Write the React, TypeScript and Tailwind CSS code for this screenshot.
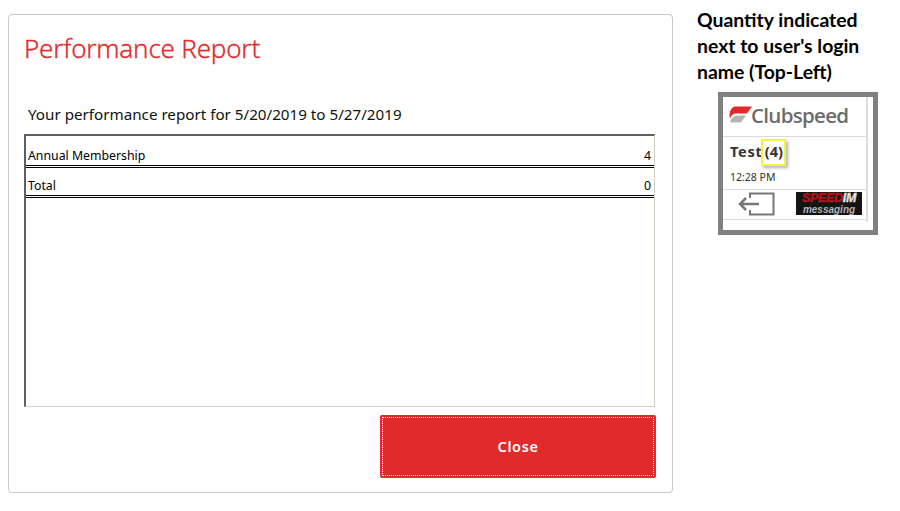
export default function App() {
  return (
    <div className="w-[900px] h-[511px] bg-white overflow-hidden flex items-start pl-2 pt-[14px] font-['Open_Sans',sans-serif]">
      <div className="w-[665px] h-[479px] shrink-0 border border-[#c8c8c8] rounded-[4px] flex flex-col pl-[15px] pr-[17px]">
        <h1 className="mt-[13px] h-[40px] text-[26px] leading-[40px] font-light text-[#e12a2b] font-['Noto_Sans',sans-serif] tracking-[-0.2px] [-webkit-text-stroke:0.3px_#e12a2b]">Performance Report</h1>
        <p className="mt-[34px] pl-[4px] h-[24px] text-[15.2px] leading-[24px] text-[#111] font-['Noto_Sans',sans-serif]">Your performance report for 5/20/2019 to 5/27/2019</p>
        <div className="mt-[8px] h-[273px] border-t-2 border-l-2 border-t-[#5f5f5f] border-l-[#5f5f5f] border-r border-b border-r-[#d4d0c8] border-b-[#d4d0c8] text-[12.3px] text-black font-['Noto_Sans',sans-serif]">
          <div className="h-[32px] border-b-[3px] border-double border-black flex items-end justify-between pl-[2px] pr-[3px] leading-[18px]">
            <span>Annual Membership</span>
            <span>4</span>
          </div>
          <div className="h-[30px] border-b-[3px] border-double border-black flex items-end justify-between pl-[2px] pr-[3px] leading-[18px]">
            <span>Total</span>
            <span>0</span>
          </div>
        </div>
        <div className="mt-[8px] flex justify-end -mr-[1px]">
          <button className="w-[276px] h-[63px] bg-[#e12a2b] rounded-[2px] p-[2px] text-white">
            <span className="w-full h-full flex items-center justify-center border border-dotted border-white text-[14.5px] font-semibold tracking-[0.6px] font-['Noto_Sans',sans-serif]">Close</span>
          </button>
        </div>
      </div>
      <div className="ml-[24px] shrink-0 flex flex-col -mt-[10px]">
        <div className="h-[78px] w-[180px] pt-[3px] text-[19.4px] leading-[26px] font-bold text-black font-['Lato',sans-serif] whitespace-nowrap">
          Quantity indicated<br />next to user's login<br />name (Top-Left)
        </div>
        <div className="mt-[10px] ml-[21px] w-[160px] h-[143px] border-[5px] border-[#808080] bg-white font-['Noto_Sans',sans-serif]">
          <div className="w-[145px] h-[125px] border-r-[2px] border-[#dedede]">
            <div className="h-[40px] border-b border-[#dcdcdc] flex items-center pl-[6px] pb-[4px]">
              <svg width="23" height="18" viewBox="0 0 23 17" className="shrink-0">
                <path d="M5 0 H23 L18 7 H7 Q3 7 1 12 Q-1 4 5 0 Z" fill="#e12a2b" />
                <path d="M7 9 H17 L12 16 H1 Q2 11 7 9 Z" fill="#b5b5b5" />
              </svg>
              <span className="text-[20.5px] leading-[24px] font-semibold text-[#6c6c6c] tracking-[-0.7px] ml-[-1px] font-['Open_Sans',sans-serif]">Clubspeed</span>
            </div>
            <div className="h-[53px] border-b border-[#dcdcdc] pl-[7px] pt-[1px]">
              <div className="flex items-center h-[27px] pt-[1px] text-[14.5px] font-bold text-[#333] tracking-[0.7px]">
                <span>Test</span>
                <span className="relative z-10 ml-[-1px] h-[27px] w-[25px] flex items-center justify-center border-[2px] border-[#f5f53c] shadow-[2px_2px_3px_rgba(0,0,0,0.3)] bg-white tracking-normal">(4)</span>
              </div>
              <div className="mt-[5px] text-[10.5px] leading-[14px] text-[#333]">12:28 PM</div>
            </div>
            <div className="h-[30px] border-b border-[#dcdcdc] flex items-center justify-between pl-[15px] pr-[4px] pb-[2px]">
              <svg width="37" height="24" viewBox="0 0 37 24" fill="none" stroke="#777" strokeWidth="2">
                <path d="M12 6 V1.5 H35.5 V22.5 H12 V18" />
                <path d="M21 12 H2 M8 6 L2 12 L8 18" strokeWidth="2.5" />
              </svg>
              <div className="w-[66px] h-[23px] bg-[#141414] flex flex-col items-center justify-center whitespace-nowrap">
                <div className="leading-[12px] text-[12.5px] font-bold italic tracking-[-0.3px] font-['Liberation_Sans',sans-serif] [-webkit-text-stroke:0.4px_currentColor]"><span className="text-[#b3141a]">SPEED</span><span className="text-[#e2e2e2]">IM</span></div>
                <div className="leading-[11px] text-[10px] font-bold italic text-[#b5b5b5] font-['Liberation_Sans',sans-serif]">messaging</div>
              </div>
            </div>
          </div>
        </div>
      </div>
    </div>
  );
}
